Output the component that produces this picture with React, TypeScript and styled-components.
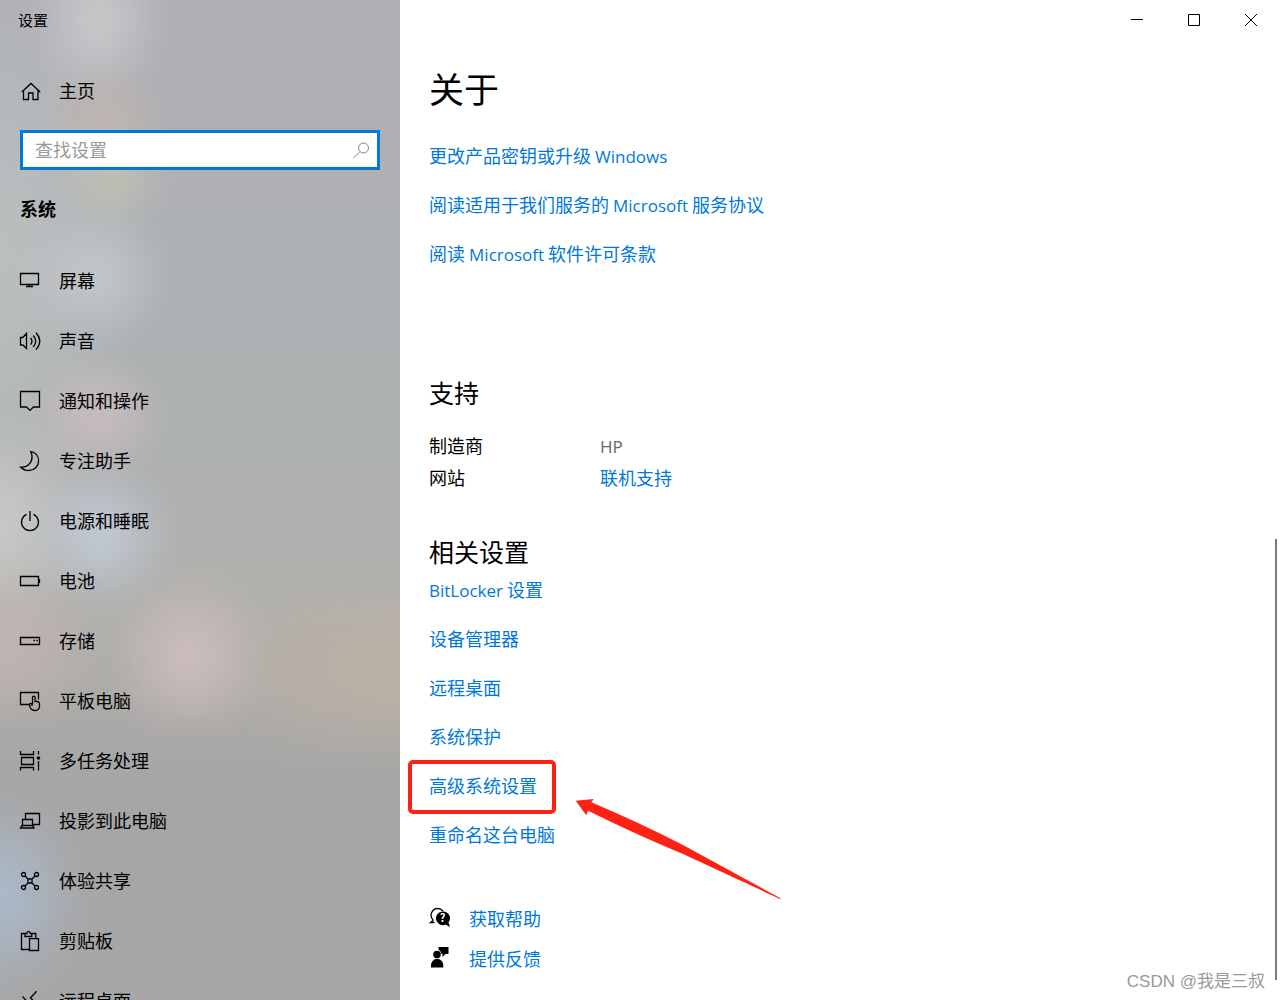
import React from "react";
import styled, { createGlobalStyle } from "styled-components";

const GlobalStyle = createGlobalStyle`
  * { box-sizing: border-box; }
  body {
    margin: 0;
    background: #fff;
    color: #000;
    font-family: "Noto Sans CJK SC", "Noto Sans", sans-serif;
    font-size: 18px;
    line-height: 24px;
  }
  h1, h2, ul, dl, dd, p { margin: 0; padding: 0; font-weight: 400; }
  ul { list-style: none; }
  a { color: inherit; text-decoration: none; }
`;

const blob = (color: string, x: number, y: number, rx: number, ry: number) =>
  `radial-gradient(ellipse ${rx}px ${ry}px at ${x}px ${y}px, ${color}ff 0%, ${color}e0 20%, ${color}90 45%, ${color}38 70%, ${color}0c 88%, ${color}00 100%)`;

const backdrop = [
  blob("#aab8c8", 0, 895, 95, 115),
  blob("#cabcbc", 190, 655, 90, 95),
  blob("#bbb0a4", 400, 670, 230, 110),
  blob("#c0b3b3", 0, 645, 110, 90),
  blob("#c0c7d1", 100, 535, 85, 85),
  blob("#c7c8c5", 0, 525, 100, 130),
  blob("#c6bbbd", 98, 415, 80, 75),
  blob("#c2c5c7", 95, 275, 90, 85),
  blob("#bdbfb4", 110, 175, 70, 65),
  blob("#bdb4b0", 105, 118, 75, 60),
  blob("#c5c6c8", 98, 20, 80, 100),
  blob("#b9bebf", 0, 250, 150, 340),
  "linear-gradient(180deg, #aeafb3 0%, #aeb0b4 20%, #abb0b2 32%, #afb1b0 50%, #b1b0ac 62%, #adaba8 70%, #a6a6a6 78%, #a7a7a7 100%)",
].join(", ");

const Window = styled.div`
  display: flex;
  height: 100vh;
  overflow: hidden;
`;

const Sidebar = styled.aside`
  flex: 0 0 400px;
  overflow: hidden;
  background: ${backdrop};
`;

const SidebarTitle = styled.p`
  padding: 8px 18px;
  font-size: 15px;
`;

const NavLink = styled.a`
  display: flex;
  align-items: center;
  gap: 18px;
  height: 60px;
  padding: 0 19px;
  &:hover { background: #0000001a; }
`;

const NavLabel = styled.span`
  padding-bottom: 2px;
`;

const HomeLink = styled(NavLink)`
  margin-top: 21px;
`;

const SearchBox = styled.label`
  display: flex;
  align-items: center;
  justify-content: space-between;
  height: 40px;
  margin: 9px 20px 0;
  padding: 0 5px 0 12px;
  border: 3px solid #0078d7;
  background: #fff;
`;

const SearchInput = styled.input`
  flex: 1;
  min-width: 0;
  padding: 0 0 2px;
  border: 0;
  outline: 0;
  background: transparent;
  font: inherit;
  &::placeholder { color: #999; opacity: 1; }
`;

const SidebarHeading = styled.h2`
  margin: 26px 20px 31px;
  font-size: 18px;
  font-weight: 700;
  line-height: 24px;
`;

const Icon = styled.svg`
  flex: none;
  display: block;
  width: 22px;
  height: 22px;
  fill: none;
  stroke: currentColor;
  stroke-width: 1.3;
`;

const SearchIcon = styled(Icon)`
  color: #888;
  stroke-width: 1;
`;

const Main = styled.main`
  flex: 1;
  display: flex;
  flex-direction: column;
  min-width: 0;
`;

const Caption = styled.header`
  display: flex;
  justify-content: flex-end;
`;

const CaptionButton = styled.button`
  display: flex;
  align-items: center;
  justify-content: center;
  width: 57px;
  height: 41px;
  padding: 0;
  border: 0;
  background: transparent;
  color: #000;
  &:hover { background: #e5e5e5; }
`;

const CaptionIcon = styled.svg`
  width: 13px;
  height: 13px;
  fill: none;
  stroke: currentColor;
`;

const Body = styled.div`
  flex: 1;
  display: flex;
  justify-content: space-between;
  min-height: 0;
`;

const Content = styled.div`
  padding: 23px 29px 0;
`;

const PageTitle = styled.h1`
  margin-bottom: 31px;
  font-size: 35px;
  line-height: 48px;
`;

const LinkList = styled.ul`
  display: flex;
  flex-direction: column;
  align-items: flex-start;
  gap: 24px;
  line-height: 25px;
`;

const Link = styled.a`
  color: #0078d7;
  &:hover { color: #666; }
`;

const Latin = styled.span`
  font-family: "Open Sans", "Noto Sans", sans-serif;
  font-size: 17px;
  line-height: 16px;
`;

const SectionTitle = styled.h2<{ $before: number; $after: number }>`
  margin: ${(p) => p.$before}px 0 ${(p) => p.$after}px;
  font-size: 25px;
  line-height: 34px;
`;

const Facts = styled.dl`
  display: grid;
  grid-template-columns: 171px auto;
  row-gap: 8px;
`;

const FactValue = styled.dd`
  color: #666;
`;

const Marked = styled.li`
  position: relative;
`;

const MarkFrame = styled.span`
  position: absolute;
  inset: -13px -19px -16px -21px;
  border: 4px solid #ff2114;
  border-radius: 5px;
  pointer-events: none;
`;

const MarkArrow = styled.svg`
  position: absolute;
  left: 146px;
  top: 26px;
  width: 208px;
  height: 102px;
  fill: #ff2114;
  pointer-events: none;
`;

const HelpList = styled.ul`
  display: flex;
  flex-direction: column;
  gap: 16px;
  margin-top: 59px;
`;

const HelpItem = styled.li`
  display: flex;
  align-items: center;
  gap: 18px;
`;

const ScrollRail = styled.div`
  display: flex;
  flex-direction: column;
  justify-content: flex-end;
  padding: 0 3px 20px 0;
`;

const ScrollThumb = styled.div`
  width: 2px;
  height: 47%;
  background: #7a7a7a;
`;

const Watermark = styled.span`
  position: absolute;
  right: 15px;
  bottom: 6px;
  color: #999;
  font-size: 17px;
  font-family: "Liberation Sans", "Noto Sans CJK SC", sans-serif;
`;

const glyphs: Record<string, React.ReactNode> = {
  home: <path d="M2.8 12 12 3.5l9.2 8.5M4.5 10.5v9h5V13H14v6.5h5v-9" />,
  display: <path d="M1.5 3.5h18v11h-18zM10.5 14.5v2M7 16.5h7" />,
  sound: <path d="M1.5 7.5h2.3l3.7-4v15l-3.7-3.5H1.5zM11.5 8q3 3.3 0 6.6M14.2 5.5q5 5.8 0 11.6M17 2.8q7.5 8.4 0 16.8" />,
  notify: <path d="M1.5 1.5h19v15.5h-6L11 20.4 7.5 17h-6z" />,
  focus: <path d="M11.7 1.6C16.5 2.3 19.6 6 19.6 10.9 19.6 16.3 15.3 20.5 10 20.5 6.8 20.5 3.8 19.4 1.7 17.2 9.5 17.8 15.8 10.5 11.7 1.6z" />,
  power: <path d="M7.5 4.4a8.5 8.5 0 1 0 7 0M11 1v10" />,
  battery: <path d="M1.5 6.5h18v9h-18zM20.5 9v4" />,
  storage: (
    <>
      <path d="M1.5 7.5h19v7h-19z" />
      <path d="M14.5 10.5h1.5M17.3 10.5h1.5" />
    </>
  ),
  tablet: (
    <path d="M10 14.5H1.500v-12h18v7M13.500 14.500V7.500a1.300 1.300 0 0 1 2.600 0v4h2.400q2 .3 2 2.200v2q0 4.800-4.500 4.800-4.500 0-5.300-4.300v-2.400q1.300-1.200 2.300.5v1.800" />
  ),
  multitask: (
    <>
      <path d="M1.500 1v3.500h13V1M2.500 7.500h12v7h-12zM1.500 20.500v-3h13v3M19.500 1v3.500M19.500 11v9.500" />
      <circle cx="19.500" cy="8" r="1.800" fill="currentColor" stroke="none" />
    </>
  ),
  project: <path d="M6.500 9.500v-6h14v11H14M3.500 16.500v-7h10v7M3 15.500h11l1 2.500H1.500z" />,
  share: (
    <>
      <circle cx="4.5" cy="4.5" r="2" />
      <circle cx="17.5" cy="4.5" r="2" />
      <circle cx="4.5" cy="17.5" r="2" />
      <circle cx="17.5" cy="17.5" r="2" />
      <path d="M9 9h4v4H9zM6 6l3 3M16 6l-3 3M6 16l3-3M16 16l-3-3" />
    </>
  ),
  clipboard: (
    <path d="M10 19.5H2.5v-16H6M12.5 3.5h4.3v5M6 6.5v-3h1.8q.2-2.200 1.700-2.200t1.700 2.200h1.600v3zM10.500 8.700h9v11.800h-9z" />
  ),
  remote: <path d="M17.700 1.300 11.500 7.800l6.200 6.500M3.500 6.500 9.700 13l-6.200 6.500" />,
};

const navItems = [
  ["display", "屏幕"],
  ["sound", "声音"],
  ["notify", "通知和操作"],
  ["focus", "专注助手"],
  ["power", "电源和睡眠"],
  ["battery", "电池"],
  ["storage", "存储"],
  ["tablet", "平板电脑"],
  ["multitask", "多任务处理"],
  ["project", "投影到此电脑"],
  ["share", "体验共享"],
  ["clipboard", "剪贴板"],
  ["remote", "远程桌面"],
];

const markedLink = "高级系统设置";
const relatedLinks = ["设备管理器", "远程桌面", "系统保护", markedLink, "重命名这台电脑"];

function Glyph({ name }: { name: string }) {
  return (
    <Icon viewBox="0 0 22 22" aria-hidden="true">
      {glyphs[name]}
    </Icon>
  );
}

export default function App() {
  return (
    <Window>
      <GlobalStyle />
      <Sidebar>
        <SidebarTitle>设置</SidebarTitle>
        <HomeLink href="#home">
          <Glyph name="home" />
          <NavLabel>主页</NavLabel>
        </HomeLink>
        <SearchBox>
          <SearchInput type="text" placeholder="查找设置" aria-label="查找设置" />
          <SearchIcon viewBox="0 0 22 22" aria-hidden="true">
            <circle cx="13.5" cy="9" r="5" />
            <path d="M10 12.5 3.5 19" />
          </SearchIcon>
        </SearchBox>
        <SidebarHeading>系统</SidebarHeading>
        <nav>
          {navItems.map(([icon, label]) => (
            <NavLink key={icon} href={`#${icon}`}>
              <Glyph name={icon} />
              <NavLabel>{label}</NavLabel>
            </NavLink>
          ))}
        </nav>
      </Sidebar>
      <Main>
        <Caption>
          <CaptionButton aria-label="最小化">
            <CaptionIcon viewBox="0 0 13 13"><path d="M0 5.5h12" /></CaptionIcon>
          </CaptionButton>
          <CaptionButton aria-label="最大化">
            <CaptionIcon viewBox="0 0 13 13"><path d="M.5.5h11v11H.5z" /></CaptionIcon>
          </CaptionButton>
          <CaptionButton aria-label="关闭">
            <CaptionIcon viewBox="0 0 13 13"><path d="m0 0 12 12M12 0 0 12" /></CaptionIcon>
          </CaptionButton>
        </Caption>
        <Body>
          <Content>
            <PageTitle>关于</PageTitle>
            <LinkList>
              <li><Link href="#upgrade">更改产品密钥或升级 <Latin>Windows</Latin></Link></li>
              <li><Link href="#services">阅读适用于我们服务的 <Latin>Microsoft</Latin> 服务协议</Link></li>
              <li><Link href="#license">阅读 <Latin>Microsoft</Latin> 软件许可条款</Link></li>
            </LinkList>
            <SectionTitle $before={109} $after={24}>支持</SectionTitle>
            <Facts>
              <dt>制造商</dt>
              <FactValue><Latin>HP</Latin></FactValue>
              <dt>网站</dt>
              <FactValue><Link href="#support">联机支持</Link></FactValue>
            </Facts>
            <SectionTitle $before={45} $after={9}>相关设置</SectionTitle>
            <LinkList>
              <li><Link href="#bitlocker"><Latin>BitLocker</Latin> 设置</Link></li>
              {relatedLinks.map((text) =>
                text === markedLink ? (
                  <Marked key={text}>
                    <Link href="#related">{text}</Link>
                    <MarkFrame />
                    <MarkArrow viewBox="0 0 208 102" aria-hidden="true">
                      <path d="M.7 1.7 18.7 0l-2.400 3.300Q65 24 108 46l98 53.500-1 .5-97-45Q60 35 13 11.700l-1.700 4.600z" />
                    </MarkArrow>
                  </Marked>
                ) : (
                  <li key={text}><Link href="#related">{text}</Link></li>
                )
              )}
            </LinkList>
            <HelpList>
              <HelpItem>
                <Icon viewBox="0 0 22 22" aria-hidden="true">
                  <path d="M4.500 13 1.500 15.500h4M4.500 13.500C-.5 9 3 1.500 8.500 1.500q3.500 0 5.500 2.500" />
                  <path d="M13.500 4.500a6.800 6.800 0 1 0 3 13l4.500 2.500-1.500-4.500A6.800 6.800 0 0 0 13.500 4.500z" fill="currentColor" stroke="none" />
                  <text x="13.500" y="15" textAnchor="middle" fontSize="11" fontWeight="700" fill="#fff" stroke="none">?</text>
                </Icon>
                <Link href="#help">获取帮助</Link>
              </HelpItem>
              <HelpItem>
                <Icon viewBox="0 0 22 22" aria-hidden="true">
                  <g fill="currentColor" stroke="none">
                    <circle cx="8" cy="7.500" r="3.800" />
                    <path d="M2 20.500v-2.500a6 6 0 0 1 12.300 0v2.500zM9.500 0h10v7h-3l-3 3V7h-1Q12 4 9.500 2.500z" />
                  </g>
                </Icon>
                <Link href="#feedback">提供反馈</Link>
              </HelpItem>
            </HelpList>
          </Content>
          <ScrollRail><ScrollThumb /></ScrollRail>
        </Body>
      </Main>
      <Watermark>CSDN @我是三叔</Watermark>
    </Window>
  );
}
